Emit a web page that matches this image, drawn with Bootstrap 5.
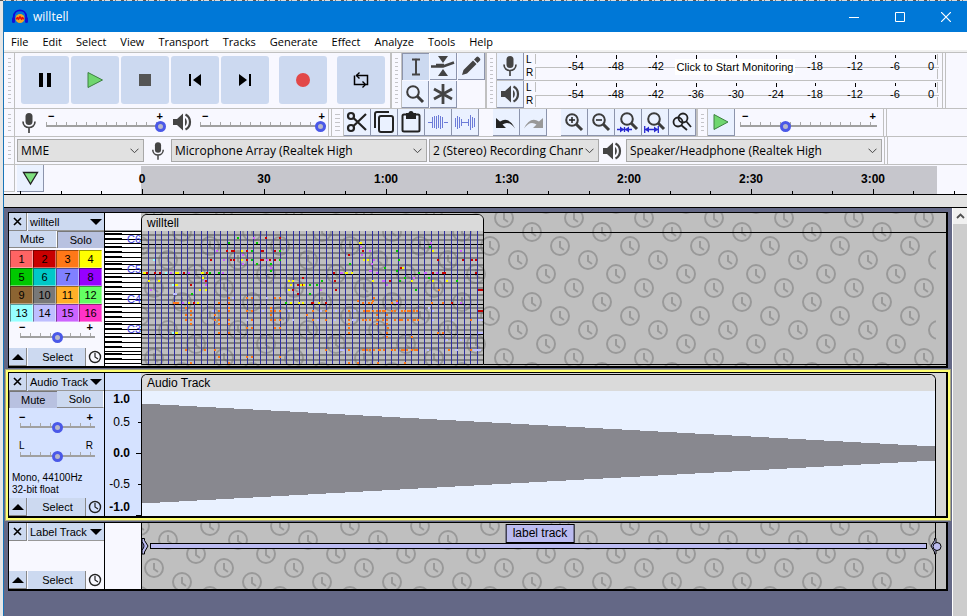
<!DOCTYPE html>
<html lang="en">
<head>
<meta charset="utf-8">
<meta name="viewport" content="width=device-width, initial-scale=1">
<title>willtell</title>
<link href="https://cdn.jsdelivr.net/npm/bootstrap@5.3.0/dist/css/bootstrap.min.css" rel="stylesheet">
<style>
:root{--face:#f8f8ff;--line:#c0c0c0;--btn:#ccd9f0;--btn-on:#b8c1e0;--key:#eaf1ff}
html,body{height:100%}
body{font:11px/14px "Open Sans","Noto Sans",sans-serif;color:#000;background:#e6e6e6;overflow:hidden}
button{padding:0;border:0;color:#000;font:inherit}
svg{display:block;flex:none}
.desktop-strip{height:1px;background:repeating-linear-gradient(90deg,#555 0 3px,#ddd 3px 5px,#777 5px 6px,#ddd 6px 11px)}
.app-window{margin-left:3px;border-left:1px solid #1874b8;background:var(--face)}
.title-bar{height:31px;background:#0078d7;color:#fff;font-size:12px}
.title-bar button{background:none;width:42px;height:31px}
.app-logo{margin:0 5px 0 8px}
.menu-bar{background:#fff;border-bottom:2px solid #f0f0f0;height:20px;padding-left:7px;gap:14px}
.menu-bar a{color:#000;text-decoration:none;line-height:19px;font-size:11px}
.tool-row{border-bottom:1px solid var(--line)}
.row-tall{height:57px;border-top:1px solid var(--line)}
.row-low{height:28px}
.grip{width:12px;flex:none;border-left:2px solid var(--line);border-right:1px solid var(--line);padding:4px 3px 3px}
.grip::before{content:"";display:block;height:100%;background:repeating-linear-gradient(180deg,transparent 0 1px,#c4c4c8 1px 2px,transparent 2px 4px)}
.grip-first{width:11px;border-left:0;padding-left:4px}
.end-cap{width:4px;border:solid var(--line);border-width:0 1px;flex:none}
.key-gap{width:14px;flex:none}
.transport-bar{padding:3px 5px 0 6px;gap:2px}
.transport-bar button{width:48px;height:48px;border-radius:3px;background:var(--btn)}
.apart{margin-left:8px}
.tool-grid{display:grid;grid-template-columns:repeat(3,27px);grid-auto-rows:27px;gap:1px}
.tool-key{width:27px;height:27px;flex:none;background:var(--key);border-right:1px solid #8c94ac;border-bottom:1px solid #8c94ac;display:flex;align-items:center;justify-content:center}
.tool-key.pressed{background:var(--btn);border:1px solid #8c94ac;border-width:1px 0 0 1px}
.meter-line{height:27px}
.meter-line + .meter-line{border-top:1px solid var(--line);height:28px}
.channel-names{width:11px;font:10px/13px "Liberation Sans",sans-serif;padding-left:2px}
.arial{font-family:"Liberation Sans",Arial,sans-serif}
.level-mic{margin:3px 8px 0 6px}
.level-out{margin:3px 7px 0 6px}
.level-a{width:121px}.level-b{width:129px}.level-c{width:140px}
.slide{padding-top:3px;font:bold 11px/8px "Liberation Sans",sans-serif}
.slide span{padding:0 3px}
.slide input{appearance:none;-webkit-appearance:none;display:block;width:100%;height:12px;margin:0;
 background:linear-gradient(#a0a0a0,#a0a0a0) 1px 5px/calc(100% - 3px) 2px no-repeat,
 repeating-linear-gradient(90deg,transparent 0 1px,#a8a8a8 1px 2px,transparent 2px 10px) 0 2px/calc(100% - 1px) 3px no-repeat}
.slide input::-webkit-slider-thumb{-webkit-appearance:none;width:11px;height:11px;border-radius:50%;border:3px solid #4a58e8;background:#b8b8c8}
.slide input::-moz-range-thumb{width:5px;height:5px;border-radius:50%;border:3px solid #4a58e8;background:#b8b8c8}
.device-bar{padding-left:2px}
.device{appearance:none;-webkit-appearance:none;height:23px;border:1px solid #a8a8a8;border-radius:0;color:#000;padding:0 15px 0 3px;font-size:12px;font-family:inherit;text-overflow:clip;
 background:#e1e1e1 url("data:image/svg+xml,%3Csvg xmlns='http://www.w3.org/2000/svg' width='9' height='6'%3E%3Cpath d='M.5 .7l4 4 4-4' fill='none' stroke='%23444'/%3E%3C/svg%3E") no-repeat right 4px center}
.w-host{width:127px}.w-dev{width:256px}.w-chan{width:170px;margin-left:2px}
.dev-mic{margin:0 6px 0 7px}
.dev-out{margin:0 4px 0 3px}
.dev-cap{margin-left:2px}
.time-ruler{height:30px;border-bottom:1px solid #000}
.pin-grip{width:11px;height:27px;border:solid var(--line);border-width:0 1px 1px 0;margin-right:2px}
.ruler-shade{background:#c6c6cc;margin:1px 30px 0 0}
.ruler-lead{width:137px;flex:none}
.gutter{height:13px;background:#e2e2e2;border-bottom:1px solid #000}
.track-area{background:#646886;padding:4px 4px 0 4px;gap:4px;min-height:0}
.track{border:1px solid #000;border-width:1px 2px 2px 1px}
.track-tall{height:156px}.track-wave{height:146px}.track-label{height:69px}
.track-focus{box-shadow:0 0 0 2px #ffff70,0 0 0 3px #a9a980}
.panel{width:96px;flex:none;border-right:1px solid #000;background:var(--face);font:11px/16px "Liberation Sans",sans-serif}
.track-focus .panel,.track-focus .v-ruler{background:#d5e2ff}
.panel button{background:var(--btn)}
.panel .close-key{width:18px;height:18px;border:solid #888;border-width:0 1px 1px 0}
.panel .name-key{height:18px;border-bottom:1px solid #999;margin-left:1px;padding:0 2px}
.panel .half-key{height:17px;border:solid #fff;border-width:0 1px 1px 0;border-bottom-color:#888}
.panel .half-key.down{background:var(--btn-on);border:solid #777;border-width:1px 0 0 1px}
.panel .select-key{width:58px;height:18px;border-right:1px solid #888;margin-left:1px;padding-left:2px}
.sync-mark{margin-left:2px}
.chan-grid{display:grid;grid-template-columns:repeat(4,1fr);padding:2px 2px 0 1px}
.panel .chan-grid button{height:18px;border:1px solid;border-color:#0006 #fff6 #fff6 #0006}
.panel .slide{padding:1px 7px 0 10px}
.panel .slide span{padding:0 4px 0 0}
.panel .pan-labels{font-weight:normal;font-size:10px}
.track-info{padding:0 0 2px 3px;font-size:10px;line-height:12px}
.v-ruler{width:36px;flex:none;background:var(--face)}
.v-head{height:18px;border-bottom:1px solid #999}
.lane{background:#bfbfbf;min-width:0}
.label-lane{border-left:1px solid #000}
.lane-pattern{position:absolute;left:1px;top:0;width:calc(100% - 11px);height:100%}
.label-lane .lane-pattern{left:0;width:calc(100% - 10px);border-right:1px solid #000}
.clip{position:relative;margin-top:1px;border:1px solid #000;border-bottom:0;border-radius:6px 6px 0 0;overflow:hidden}
.clip-midi{width:343px;max-width:100%;height:151px;border-bottom:1px solid #000}
.clip-name{height:16px;background:#dadada;font:12px/16px "Liberation Sans",sans-serif;padding-left:5px}
.lane-rule{position:absolute;left:343px;right:0;height:1px;background:#000;top:19px}
.lane-rule.low{top:151px}
.clip-wave{margin-right:10px;background:#e9f1ff}
.wave-lane{background:#d6d6d6}
.label-row{position:absolute;left:0;right:4px;top:14px;height:18px}
.label-bar{height:6px;background:#bbbbf0;border:1px solid #000;margin:0 3px 0 1px}
.label-tag{position:absolute;left:50%;top:1px;transform:translateX(-50%);height:19px;margin-left:-4px;border:1px solid #000;background:#bbbbf0;font:12px/17px "Liberation Sans",sans-serif;padding:0 6px;white-space:nowrap}
.scroller{width:15px;flex:none;background:#cdcdcd;border-left:1px solid #fff}
.scroller button{height:16px;background:#f0f0f0}
</style>
</head>
<body class="d-flex flex-column">
<svg width="0" height="0" class="position-absolute" aria-hidden="true">
 <defs>
  <symbol id="mic" viewBox="0 0 16 22"><rect x="4.5" y="1" width="7" height="12" rx="3.5" fill="#444"/><path d="M2 9.5c0 8 12 8 12 0M8 15.5V21" fill="none" stroke="#444" stroke-width="1.7"/></symbol>
  <symbol id="speaker" viewBox="0 0 20 20"><path d="M1 7h4l6-5.5v17L5 13H1z" fill="#444"/><path d="M13 6c2.5 2 2.5 6 0 8" fill="#444"/><path d="M13.5 2.5c6 3 6 12 0 15" fill="none" stroke="#444" stroke-width="2.2"/></symbol>
  <symbol id="lens" viewBox="0 0 20 20"><circle cx="8" cy="8" r="5.8" fill="none" stroke="#3c3c3c" stroke-width="2"/><path d="M12 12l6 6" stroke="#3c3c3c" stroke-width="3"/></symbol>
  <symbol id="clockface" viewBox="0 0 14 14"><circle cx="7" cy="7" r="5.5" fill="none" stroke="#222" stroke-width="1.4"/><path d="M7 3v4l3 2" fill="none" stroke="#222" stroke-width="1.2"/></symbol>
  <g id="dial"><circle r="9" fill="none" stroke="currentColor" stroke-width="2"/><path d="M0-5V1L4 4" fill="none" stroke="currentColor" stroke-width="2"/></g>
  <g id="dials"><use href="#dial"/><use href="#dial" x="70"/><use href="#dial" y="70"/><use href="#dial" x="70" y="70"/><use href="#dial" x="28" y="14"/><use href="#dial" x="56" y="28"/><use href="#dial" x="14" y="42"/><use href="#dial" x="42" y="56"/></g>
  <pattern id="dialsA" color="#999" width="70" height="70" patternUnits="userSpaceOnUse" patternTransform="translate(12 5)"><use href="#dials"/></pattern>
  <pattern id="dialsB" color="#999" width="70" height="70" patternUnits="userSpaceOnUse" patternTransform="translate(12 45)"><use href="#dials"/></pattern>
  <pattern id="dialsC" color="#606060" width="70" height="70" patternUnits="userSpaceOnUse" patternTransform="translate(12 -13)"><use href="#dials"/></pattern>
 </defs>
</svg>
<div class="desktop-strip"></div>
<div class="app-window flex-grow-1 d-flex flex-column">
 <header class="title-bar d-flex align-items-center">
  <svg width="16" height="16" viewBox="0 0 16 16" class="app-logo"><circle cx="8" cy="9.5" r="4.5" fill="#f5a623"/><path d="M4 10l1.5-1 1 1 1.500-2 1.500 2 1-1L12 10" fill="none" stroke="#e01010" stroke-width="1.8"/><path d="M1.8 12V7.5C2-.8 14-.8 14.2 7.5V12" fill="none" stroke="#0a0ae0" stroke-width="1.8"/><rect x="0" y="8" width="3" height="6" rx="1.5" fill="#1010d8"/><rect x="13" y="8" width="3" height="6" rx="1.5" fill="#1010d8"/></svg>
  <span>willtell</span>
  <div class="ms-auto d-flex gap-1">
   <button aria-label="Minimize"><svg width="10" height="10" class="m-auto"><path d="M0 5.5h10" stroke="#fff"/></svg></button>
   <button aria-label="Maximize"><svg width="10" height="10" class="m-auto"><path d="M.5.5h9v9h-9z" fill="none" stroke="#fff"/></svg></button>
   <button aria-label="Close"><svg width="10" height="10" class="m-auto"><path d="M0 0l10 10M10 0L0 10" stroke="#fff" stroke-width="1.2"/></svg></button>
  </div>
 </header>
 <nav class="menu-bar d-flex">
  <a href="#">File</a><a href="#">Edit</a><a href="#">Select</a><a href="#">View</a><a href="#">Transport</a><a href="#">Tracks</a><a href="#">Generate</a><a href="#">Effect</a><a href="#">Analyze</a><a href="#">Tools</a><a href="#">Help</a>
 </nav>

 <div class="tool-row row-tall d-flex">
  <div class="grip grip-first"></div>
  <div class="transport-bar d-flex align-items-start">
   <button aria-label="Pause"><svg class="m-auto" width="14" height="14"><path d="M1 0h4v14H1zM9 0h4v14H9z"/></svg></button>
   <button aria-label="Play"><svg class="m-auto" width="18" height="18"><path d="M2 1.5L16.5 9 2 16.5z" fill="#6fd66f" stroke="#3c8040"/></svg></button>
   <button aria-label="Stop"><svg class="m-auto" width="12" height="12"><path d="M0 0h12v12H0z" fill="#555"/></svg></button>
   <button aria-label="Skip to start"><svg class="m-auto" width="14" height="14"><path d="M1 1h2v12H1zM13 1v12L5 7z"/></svg></button>
   <button aria-label="Skip to end"><svg class="m-auto" width="14" height="14"><path d="M11 1h2v12h-2zM1 1v12l8-6z"/></svg></button>
   <button aria-label="Record" class="apart"><svg class="m-auto" width="14" height="14"><circle cx="7" cy="7" r="7" fill="#e24848"/></svg></button>
   <button aria-label="Loop" class="apart"><svg class="m-auto" width="18" height="18" fill="none" stroke="#000" stroke-width="1.5"><path d="M5 13.500H2.500V4.500M4 4.500h11.500v7M13 13.500H5M15.500 11v2.500h-2"/><path d="M7.500 1.500l-3 3 3 3M10.500 10.500l3 3-3 3" stroke-width="1.4"/></svg></button>
  </div>
  <div class="grip"></div>
  <div class="tool-grid">
   <button class="tool-key pressed" aria-label="Selection tool"><svg width="12" height="20" fill="none" stroke="#444" stroke-width="2"><path d="M2 2.5h3.500L6 3l.5-.5H10M6 3v14M2 17.5h8"/></svg></button>
   <button class="tool-key" aria-label="Envelope tool"><svg width="24" height="20"><path d="M7 0h10l-5 7zM7 20h10l-5-7z" fill="#444"/><path d="M0 10.5h12l11-4M5 9h8" stroke="#444" stroke-width="2.6" fill="none"/></svg></button>
   <button class="tool-key" aria-label="Draw tool"><svg width="20" height="20" fill="#444"><path d="M1 19l1.500-5L12 4.500 15.500 8 6 17.500zM13 3.500L15.500 1q1-.8 2 0L19 2.500q.8 1 0 2L16.500 7z"/></svg></button>
   <button class="tool-key" aria-label="Zoom tool"><svg width="20" height="20"><use href="#lens"/></svg></button>
   <button class="tool-key" aria-label="Multi-tool"><svg width="20" height="20" stroke="#444" stroke-width="2.8"><path d="M10 0v20M1 5l18 10M1 15L19 5"/></svg></button>
  </div>
  <div class="grip"></div>
  <div>
   <div class="meter-line d-flex"><button class="tool-key" aria-label="Recording level"><svg width="16" height="22"><use href="#mic"/></svg></button><div class="channel-names">L<br>R</div><svg class="meter arial" data-note="Click to Start Monitoring" width="407" height="27"></svg></div>
   <div class="meter-line d-flex"><button class="tool-key" aria-label="Playback level"><svg width="20" height="20"><use href="#speaker"/></svg></button><div class="channel-names">L<br>R</div><svg class="meter arial" width="407" height="27"></svg></div>
  </div>
  <div class="end-cap"></div>
 </div>

 <div class="tool-row row-low d-flex">
  <div class="grip grip-first"></div>
  <svg width="16" height="22" class="level-mic"><use href="#mic"/></svg>
  <label class="slide level-a"><span class="d-flex justify-content-between"><i class="fst-normal">−</i><i class="fst-normal">+</i></span><input type="range" aria-label="Recording volume" value="100"></label>
  <svg width="20" height="20" class="level-out"><use href="#speaker"/></svg>
  <label class="slide level-b"><span class="d-flex justify-content-between"><i class="fst-normal">−</i><i class="fst-normal">+</i></span><input type="range" aria-label="Playback volume" value="98"></label>
  <div class="end-cap"></div>
  <div class="grip border-start-0"></div>
  <button class="tool-key" aria-label="Cut"><svg width="22" height="22" fill="none" stroke="#222" stroke-width="2.2"><circle cx="5" cy="5" r="3"/><circle cx="5" cy="17" r="3"/><path d="M7.5 7L20 19M7.5 15L20 3"/></svg></button>
  <button class="tool-key" aria-label="Copy"><svg width="20" height="22" fill="none" stroke="#222" stroke-width="2"><rect x="5" y="5" width="14" height="16" rx="2"/><path d="M1 17V3q0-2 2-2h12"/></svg></button>
  <button class="tool-key" aria-label="Paste"><svg width="20" height="22" fill="none" stroke="#222" stroke-width="2"><rect x="1.5" y="3.5" width="17" height="17" rx="1.5"/><path d="M6 3h8v4H6z" fill="#222"/><circle cx="10" cy="2.5" r="1.5"/></svg></button>
  <button class="tool-key" aria-label="Trim"><svg width="22" height="18" fill="none" stroke="#6c7cd8" shape-rendering="crispEdges"><path d="M1 9.5h4M17 9.5h4M5.500 4v11M7.500 3v12M9.500 3v13M11.500 2v13M13.500 3v13M15.500 4v11"/></svg></button>
  <button class="tool-key" aria-label="Silence"><svg width="22" height="18" fill="none" stroke="#6c7cd8" shape-rendering="crispEdges"><path d="M8 9.5h6M1.500 5v9M3.500 3v13M5.500 4v11M7.500 6v7M14.500 6v7M16.500 2v15M18.500 4v11M20.500 5v9"/></svg></button>
  <div class="key-gap"></div>
  <button class="tool-key" aria-label="Undo"><svg width="22" height="18"><path d="M1 5v10h10L7.500 11.500Q14 7 20 15.500 14 3 5 8.500z" fill="#222"/></svg></button>
  <button class="tool-key" aria-label="Redo"><svg width="22" height="18"><path d="M21 5v10H11l3.500-3.500Q8 7 2 15.500 8 3 17 8.500z" fill="#999"/></svg></button>
  <div class="key-gap"></div>
  <button class="tool-key" aria-label="Zoom in"><svg width="20" height="20"><use href="#lens"/><path d="M5 8h6M8 5v6" stroke="#222" stroke-width="1.5"/></svg></button>
  <button class="tool-key" aria-label="Zoom out"><svg width="20" height="20"><use href="#lens"/><path d="M5 8h6" stroke="#222" stroke-width="1.5"/></svg></button>
  <button class="tool-key" aria-label="Fit selection"><svg width="22" height="24"><use href="#lens" x="2" y="1" width="20" height="20"/><path d="M0 19.5h15M7.500 17v5" stroke="#2828d0" stroke-width="1.3"/><path d="M3 16.500v6L7 19.500zM12 16.500v6L8 19.500z" fill="#2828d0"/></svg></button>
  <button class="tool-key" aria-label="Fit project"><svg width="22" height="24"><use href="#lens" x="2" y="1" width="20" height="20"/><path d="M.7 16v7M14.300 16v7M1 19.500h13" stroke="#2828d0" stroke-width="1.3"/><path d="M5 16.500v6L1 19.500zM10 16.500v6l4-3z" fill="#2828d0"/></svg></button>
  <button class="tool-key" aria-label="Zoom toggle"><svg width="20" height="20" fill="none" stroke="#222" stroke-width="1.8"><circle cx="11" cy="6" r="4.5"/><path d="M14 9l5 6"/><circle cx="6" cy="10" r="4.5"/><path d="M9 13l6 5"/></svg></button>
  <div class="grip"></div>
  <button class="tool-key" aria-label="Play at speed"><svg width="16" height="18"><path d="M1 1.500L15 9 1 16.500z" fill="#6fd66f" stroke="#3c8040"/></svg></button>
  <label class="slide level-c ms-1"><span class="d-flex justify-content-between"><i class="fst-normal">−</i><i class="fst-normal">+</i></span><input type="range" aria-label="Playback speed" value="32"></label>
  <div class="end-cap ms-1"></div>
 </div>

 <div class="tool-row row-low d-flex">
  <div class="grip grip-first"></div>
  <div class="device-bar d-flex align-items-center">
   <select class="device w-host" aria-label="Audio host"><option>MME</option></select>
   <svg width="14" height="20" class="dev-mic"><use href="#mic"/></svg>
   <select class="device w-dev" aria-label="Recording device"><option>Microphone Array (Realtek High</option></select>
   <select class="device w-chan" aria-label="Recording channels"><option>2 (Stereo) Recording Chann</option></select>
   <svg width="20" height="20" class="dev-out"><use href="#speaker"/></svg>
   <select class="device w-dev" aria-label="Playback device"><option>Speaker/Headphone (Realtek High</option></select>
  </div>
  <div class="end-cap dev-cap"></div>
 </div>

 <div class="time-ruler d-flex position-relative">
  <div class="ruler-lead d-flex">
   <div class="pin-grip"></div>
   <button class="tool-key" aria-label="Pin play head"><svg width="17" height="15"><path d="M1.500 1.500h14L8.500 13z" fill="#7fe07f" stroke="#222" stroke-width="1.3"/></svg></button>
  </div>
  <div class="ruler-shade flex-grow-1"></div>
  <svg id="timeline" class="arial position-absolute top-0 start-0 w-100 h-100 pe-none"></svg>
 </div>
 <div class="gutter"></div>

 <div class="d-flex flex-grow-1">
  <main class="track-area flex-grow-1 d-flex flex-column">
   <section class="track track-tall d-flex">
    <div class="panel d-flex flex-column">
     <div class="d-flex"><button class="close-key" aria-label="Close track"><svg class="m-auto" width="9" height="9"><path d="M1 1l7 7M8 1L1 8" stroke="#000" stroke-width="1.6"/></svg></button><button class="name-key flex-grow-1 d-flex align-items-center justify-content-between">willtell<svg width="12" height="6"><path d="M0 0h12L6 6z"/></svg></button></div>
     <div class="d-flex"><button class="half-key w-50">Mute</button><button class="half-key w-50 down">Solo</button></div>
     <div class="chan-grid" id="channels"></div>
     <label class="slide"><span class="d-flex justify-content-between"><i class="fst-normal">−</i><i class="fst-normal">+</i></span><input type="range" aria-label="Velocity" value="49"></label>
     <div class="d-flex align-items-center mt-auto"><button class="close-key" aria-label="Collapse"><svg class="m-auto" width="12" height="6"><path d="M0 6h12L6 0z"/></svg></button><button class="select-key">Select</button><svg class="sync-mark" width="14" height="14"><use href="#clockface"/></svg></div>
    </div>
    <div class="v-ruler d-flex flex-column"><div class="v-head"></div><svg id="keys" class="arial" width="36" height="134"></svg></div>
    <div class="lane flex-grow-1 position-relative">
     <svg class="lane-pattern"><rect width="100%" height="100%" fill="url(#dialsA)"/></svg>
     <div class="lane-rule"></div><div class="lane-rule low"></div>
     <div class="clip clip-midi"><div class="clip-name">willtell</div><svg id="roll" width="100%" height="133" shape-rendering="crispEdges"></svg></div>
    </div>
   </section>

   <section class="track track-wave track-focus d-flex">
    <div class="panel d-flex flex-column">
     <div class="d-flex"><button class="close-key" aria-label="Close track"><svg class="m-auto" width="9" height="9"><path d="M1 1l7 7M8 1L1 8" stroke="#000" stroke-width="1.6"/></svg></button><button class="name-key flex-grow-1 d-flex align-items-center justify-content-between">Audio Track<svg width="12" height="6"><path d="M0 0h12L6 6z"/></svg></button></div>
     <div class="d-flex"><button class="half-key w-50 down">Mute</button><button class="half-key w-50">Solo</button></div>
     <label class="slide mt-1"><span class="d-flex justify-content-between"><i class="fst-normal">−</i><i class="fst-normal">+</i></span><input type="range" aria-label="Gain" value="49"></label>
     <label class="slide mt-2"><span class="pan-labels d-flex justify-content-between"><i class="fst-normal">L</i><i class="fst-normal">R</i></span><input type="range" aria-label="Pan" value="49"></label>
     <div class="track-info mt-auto">Mono, 44100Hz<br>32-bit float</div>
     <div class="d-flex align-items-center"><button class="close-key" aria-label="Collapse"><svg class="m-auto" width="12" height="6"><path d="M0 6h12L6 0z"/></svg></button><button class="select-key">Select</button><svg class="sync-mark" width="14" height="14"><use href="#clockface"/></svg></div>
    </div>
    <div class="v-ruler d-flex flex-column"><div class="v-head"></div>
     <svg class="arial" width="36" height="125" font-size="12" text-anchor="end"><g font-weight="bold"><text x="25" y="12">1.0</text><text x="25" y="66">0.0</text><text x="25" y="120">-1.0</text></g><text x="25" y="35">0.5</text><text x="25" y="97">-0.5</text><path d="M33 31.500h3M31 62.500h5M33 93.500h3M31 124.500h5" stroke="#000"/></svg></div>
    <div class="lane wave-lane flex-grow-1 d-flex flex-column">
     <div class="clip clip-wave flex-grow-1 d-flex flex-column"><div class="clip-name">Audio Track</div><svg class="w-100 flex-grow-1" height="125" viewBox="0 0 793 125" preserveAspectRatio="none" shape-rendering="crispEdges"><path d="M0 12.500L793 55.500V69.500L0 112.500z" fill="#88888f"/></svg></div>
    </div>
   </section>

   <section class="track track-label d-flex">
    <div class="panel d-flex flex-column">
     <div class="d-flex"><button class="close-key" aria-label="Close track"><svg class="m-auto" width="9" height="9"><path d="M1 1l7 7M8 1L1 8" stroke="#000" stroke-width="1.6"/></svg></button><button class="name-key flex-grow-1 d-flex align-items-center justify-content-between">Label Track<svg width="12" height="6"><path d="M0 0h12L6 6z"/></svg></button></div>
     <div class="d-flex align-items-center mt-auto"><button class="close-key" aria-label="Collapse"><svg class="m-auto" width="12" height="6"><path d="M0 6h12L6 0z"/></svg></button><button class="select-key">Select</button><svg class="sync-mark" width="14" height="14"><use href="#clockface"/></svg></div>
    </div>
    <div class="v-ruler"></div>
    <div class="lane label-lane flex-grow-1 position-relative">
     <svg class="lane-pattern"><rect width="100%" height="100%" fill="url(#dialsB)"/></svg>
     <div class="label-row d-flex align-items-center">
      <svg width="7" height="18"><path d="M0 1.500h2.500v2l3.500 5.500-3.500 6v2H0z" fill="#bbbbf0" stroke="#000"/><path d="M0 5q4 4 0 8" fill="none" stroke="#000"/></svg>
      <div class="label-bar flex-grow-1"></div>
      <svg width="12" height="18"><path d="M6 1.500H4.500v2L1 9l3.500 6v2H6z" fill="#bbbbf0" stroke="#000"/><circle cx="7" cy="9.5" r="4" fill="#bbbbf0" stroke="#000"/></svg>
     </div>
     <div class="label-tag">label track</div>
    </div>
   </section>
  </main>
  <div class="scroller"><button class="w-100" aria-label="Scroll up"><svg class="m-auto" width="9" height="6"><path d="M1 5l3.500-3.500L8 5" fill="none" stroke="#505050" stroke-width="1.8"/></svg></button></div>
 </div>
</div>
<script src="https://cdn.jsdelivr.net/npm/bootstrap@5.3.0/dist/js/bootstrap.bundle.min.js"></script>
<script>
const NS = 'http://www.w3.org/2000/svg';
function add(parent, tag, attrs, text) {
  const el = document.createElementNS(NS, tag);
  for (const k in attrs) el.setAttribute(k, attrs[k]);
  if (text !== undefined) el.textContent = text;
  parent.appendChild(el);
  return el;
}
function box(p, x, y, w, h, fill) { return add(p, 'rect', {x, y, width: w, height: h, fill}); }

// Level meters: one mark per 6 dB
document.querySelectorAll('.meter').forEach(m => {
  m.setAttribute('font-size', 11);
  m.setAttribute('text-anchor', 'middle');
  box(m, 0, 1, 1, 10, '#c0c0c0'); box(m, 0, 15, 1, 11, '#c0c0c0');
  box(m, 0, 14, 404, 1, '#c0c0c0');
  box(m, 402, 1, 1, 11, '#c0c0c0'); box(m, 402, 16, 1, 10, '#c0c0c0');
  for (let i = 0; i < 10; i++) {
    const x = Math.round(41 + 39.9 * i), db = -54 + 6 * i;
    box(m, x, 2, 1, db % 12 ? 3 : 4, '#000');
    if (m.dataset.note && db > -42 && db < -18) continue;
    add(m, 'text', {x: db ? x : x - 4, y: 17}, db);
  }
  if (m.dataset.note) {
    box(m, 140, 6, 120, 16, '#fff');
    add(m, 'text', {x: 200, y: 18}, m.dataset.note);
  }
});

// Timeline: a tick each 10 s, a label each 30 s
const tl = document.getElementById('timeline');
for (let s = -30; s <= 600; s += 10) {
  const x = Math.round(138 + s * 4.06), major = s % 30 === 0;
  box(tl, x, major && s >= 0 ? 24 : 26, 1, 6, '#000');
  if (major && s >= 0 && s <= 180) {
    const label = s < 60 ? String(s) : Math.floor(s / 60) + ':' + String(s % 60).padStart(2, '0');
    add(tl, 'text', {x, y: 18, 'text-anchor': 'middle', 'font-size': 12, 'font-weight': 'bold'}, label);
  }
}

// MIDI channel keys
['#ff6464','#c80000','#ff7818','#ffff00','#00c800','#00c8c8','#8080ff','#9600ff','#8c6432','#787878','#ffaf28','#64ff64','#96ffff','#bebeff','#cc64ff','#ff32c8']
  .forEach((c, i) => {
    const b = document.createElement('button');
    b.style.background = c;
    b.textContent = i + 1;
    document.getElementById('channels').appendChild(b);
  });

// Piano keys and roll share the same octave geometry
const keys = document.getElementById('keys'), roll = document.getElementById('roll');
const sharps = [1, 3, 5, 8, 10];
box(keys, 0, 0, 36, 134, '#fff');
box(roll, 0, 0, '100%', 133, '#bfbfbf');
for (let o = -1; o < 5; o++) {
  const top = 13 + o * 30;
  sharps.forEach(n => {
    const y = Math.round(top + n * 2.5);
    box(keys, 0, y - 1, 17, 2, '#000');
    box(keys, 17, y, 19, 1, '#000');
    box(roll, 0, y, '100%', 2, '#808080');
  });
  box(keys, 0, top - 1, 36, 1, '#000');
  box(keys, 0, top + 17, 36, 1, '#000');
}
['C6', 'C5', 'C4', 'C3'].forEach((name, i) =>
  add(keys, 'text', {x: 22, y: 12 + i * 30, 'font-size': 11, fill: '#4444e0'}, name));
add(roll, 'rect', {width: '100%', height: '100%', fill: 'url(#dialsC)', opacity: .4, 'shape-rendering': 'auto'});
for (let o = 0; o < 4; o++) box(roll, 0, 13 + o * 30, '100%', 1, '#000');
for (let i = 0; i < 51; i++) box(roll, Math.round(6 + i * 6.58), 0, 1, 133, '#3030a0');

// Notes: row, then colour letter + x (+ *width)
const ink = {r:'#c80000', g:'#00c800', y:'#ffff00', p:'#cc64ff', o:'#ff7818', l:'#bebeff', c:'#96ffff'};
`7 g95 p111 r123 r137
12 g86 g114 y217*3 p288
16 p218 g287
20 p74 r84 r89 r91*2 y99 r104 g109 r119*3 r132 g137 r220 p227*2 g254*2 y290 p318
24 p100 r206 p219
29 c11 r68 p81 r88 r91*2 y99 r104 g109 r118 r120 p124 r127 r132 g137 y221 y225 p231*2 g256 r295 r320 r329*2 r333
33 p100 g114 g128 g207 p229
37 p128 g242 r258 y260
40 g128 p227*3 g254*2
42 y1*3 r4 r12 r17 c23 p28 y33*4 r41 p46 y59*3 r64 g67 g76 p80 r191*2 p198*3 y203*3 y209 p234*2 g276*2 p282*3 r290 p294 r300 r302 r333
47 y60 r160 g262*2 p271 g286
50 y6 y16 p62 r63 y146 y150 g179 r192 y230 p240*3 r247*2 g257 y269*2 y290 y304 g314
54 c30 y33*3 r48 p63 y148 r155*2 y158 r160 y161 g167 g174 p244*2
59 p8 y57 y63 y146 r150 p178 r193 g273*2 o296 r336*5
63 l31*4 g49 r155 g167
67 o86 l90 o104 o109 l124 o132 o137 o231
70 o215 o230 o254
72 o31*6 p40 y46 r51*2 y55 o76 o86 g143 y148 y156 y160 r169*3 y176 r183 o220 o226 o229 o249 p254 o289 o300 r309 p318
77 o43 o86 o128 l286
80 o48 l70 o76 o86 o104 o109 l120 o128 o132 o137 l146 o170 l178 o183 l193 o206 l212 o221*2 o224 o226 o230 o234*2 o237 o240 o242 o249*2 o252 o259*2 o262 o265 o267 o271*2 o274*2 l290 r336*5
84 o43 o48 o72 o128 o164 o234 o244
89 o43 o48 o72 o76 o86 l104 o109 o128 o132 o137 l150 o170*2 l175 o183 l192 o206 l210*4 o220 o223*2 o227 o234*3 o240 o244*2 o252 o257 o259 o265 o271*3 o275 l290 l310 o328*2 l336*5
93 o48 o76 o86 o206 o234 o244
97 o104 o109 o132 o137 o206 o245
102 c30 y33*3 o76 o86 o206 o244 o295 o300 l336*5
106 o244 o269
109 l304 l318
119 o43 o62*2 o72 l173*3 o183 l198*4 o206 o220*3 o224 o227 o231*2 o236*3 o241 o249 o252*2 o259 o261 o264*2 o269 o272*4 l285 o306 l313*3 o328*2 l331*8
126 o76 o104 o109 o137
132 o48 o86 o206 o215 o235*2 o262`.split('\n').forEach(line => {
  const [y, ...notes] = line.split(' ');
  notes.forEach(n => {
    const [x, w] = n.slice(1).split('*');
    box(roll, x, y - 1, w || 2, 2, ink[n[0]]);
  });
});
</script>
</body>
</html>
